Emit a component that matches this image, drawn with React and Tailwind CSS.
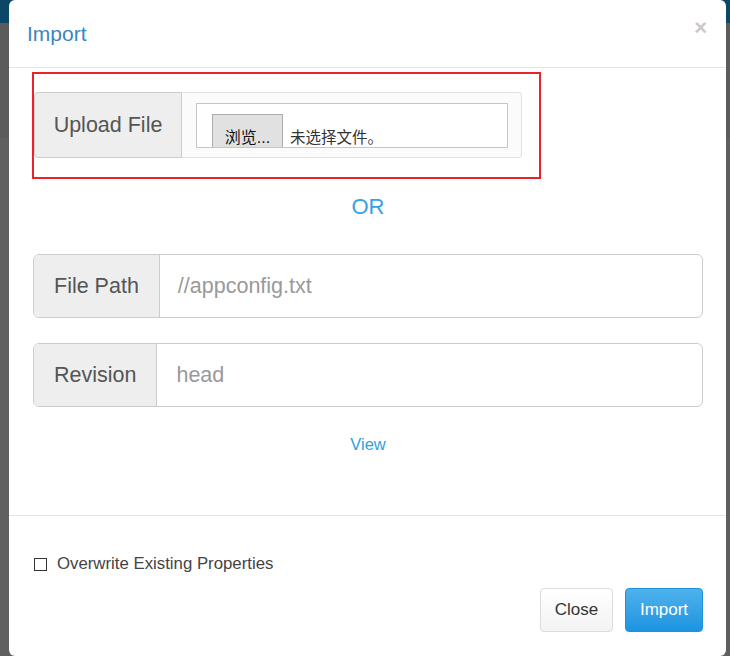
export default function App() {
  const font = "font-['Liberation_Sans','Noto_Sans_CJK_SC',sans-serif]";
  return (
    <div className={`relative w-[730px] h-[656px] overflow-hidden bg-[#5d5d5d] ${font}`}>
      <div className="h-[23px] bg-[#0d4767]" />
      <div className="h-[115px] bg-[#5b5b5b]" />
      <div className="h-[518px] bg-[#5f5f5f]" />

      <div className="absolute left-[9px] top-0 w-[717px] h-[656px] bg-white rounded-[6px] flex flex-col">
        {/* header */}
        <div className="h-[68px] border-b border-[#e5e5e5] flex items-center justify-between pl-[18px] pr-[19px]">
          <h4 className="text-[21px] text-[#3a85c3] leading-none">Import</h4>
          <span className="text-[22px] font-bold text-[#c9c9c9] leading-none mb-[12px]">×</span>
        </div>

        {/* body */}
        <div className="h-[448px] border-b border-[#e5e5e5] pl-[24px] pr-[23px] pt-[4px]">
          <div className="-ml-[1px] w-[509px] h-[107px] border-2 border-[#e8232b] pt-[18px]">
            <div className="flex h-[66px] w-[488px]">
              <div className="w-[148px] bg-[#eeeeee] border border-[#cccccc] rounded-l-[4px] flex items-center justify-center text-[21.5px] text-[#555]">
                Upload File
              </div>
              <div className="flex-1 border border-l-0 border-[#e2e2e2] rounded-r-[4px] bg-[#fbfbfb] pl-[14px] pr-[13px] pt-[10px]">
                <div className="h-[45px] border border-[#c6c6c6] bg-white overflow-hidden flex items-start pl-[15px] pt-[10px]">
                  <div className="w-[71px] h-[44px] shrink-0 bg-[#e1e1e1] border border-[#adadad] flex justify-center pt-[15px] text-[16px] text-[#111] leading-none">
                    浏览...
                  </div>
                  <span className="ml-[7px] mt-[16px] text-[15.5px] text-[#333] leading-none">未选择文件。</span>
                </div>
              </div>
            </div>
          </div>

          <div className="h-[54px] flex items-center justify-center text-[22px] text-[#35a2e6]">OR</div>

          <div className="mt-[21px] flex h-[64px] border border-[#cccccc] rounded-[6px] overflow-hidden">
            <div className="px-[20px] bg-[#eeeeee] border-r border-[#cccccc] flex items-center text-[21.5px] text-[#555]">File Path</div>
            <div className="flex-1 flex items-center pl-[18px] text-[21.5px] text-[#999]">//appconfig.txt</div>
          </div>

          <div className="mt-[25px] flex h-[64px] border border-[#cccccc] rounded-[6px] overflow-hidden">
            <div className="px-[20px] bg-[#eeeeee] border-r border-[#cccccc] flex items-center text-[21.5px] text-[#555]">Revision</div>
            <div className="flex-1 flex items-center pl-[19px] text-[21.5px] text-[#999]">head</div>
          </div>

          <div className="h-[74px] flex items-center justify-center text-[16.5px] text-[#2f9fdc]">View</div>
        </div>

        {/* footer */}
        <div className="pl-[25px] pr-[23px] pt-[41px]">
          <div className="flex items-center h-[14px]">
            <div className="w-[13px] h-[13px] border border-[#333] bg-white" />
            <span className="ml-[10px] text-[16.8px] text-[#444] leading-none">Overwrite Existing Properties</span>
          </div>
          <div className="mt-[17px] flex justify-end gap-[12px]">
            <div className="w-[73px] h-[44px] rounded-[4px] border border-[#dcdcdc] bg-gradient-to-b from-white to-[#f3f3f3] flex items-center justify-center text-[17px] text-[#333]">Close</div>
            <div className="w-[78px] h-[44px] rounded-[4px] border border-[#1e90d8] bg-gradient-to-b from-[#4db2ec] to-[#1a94e0] flex items-center justify-center text-[17px] text-white">Import</div>
          </div>
        </div>
      </div>
    </div>
  );
}
